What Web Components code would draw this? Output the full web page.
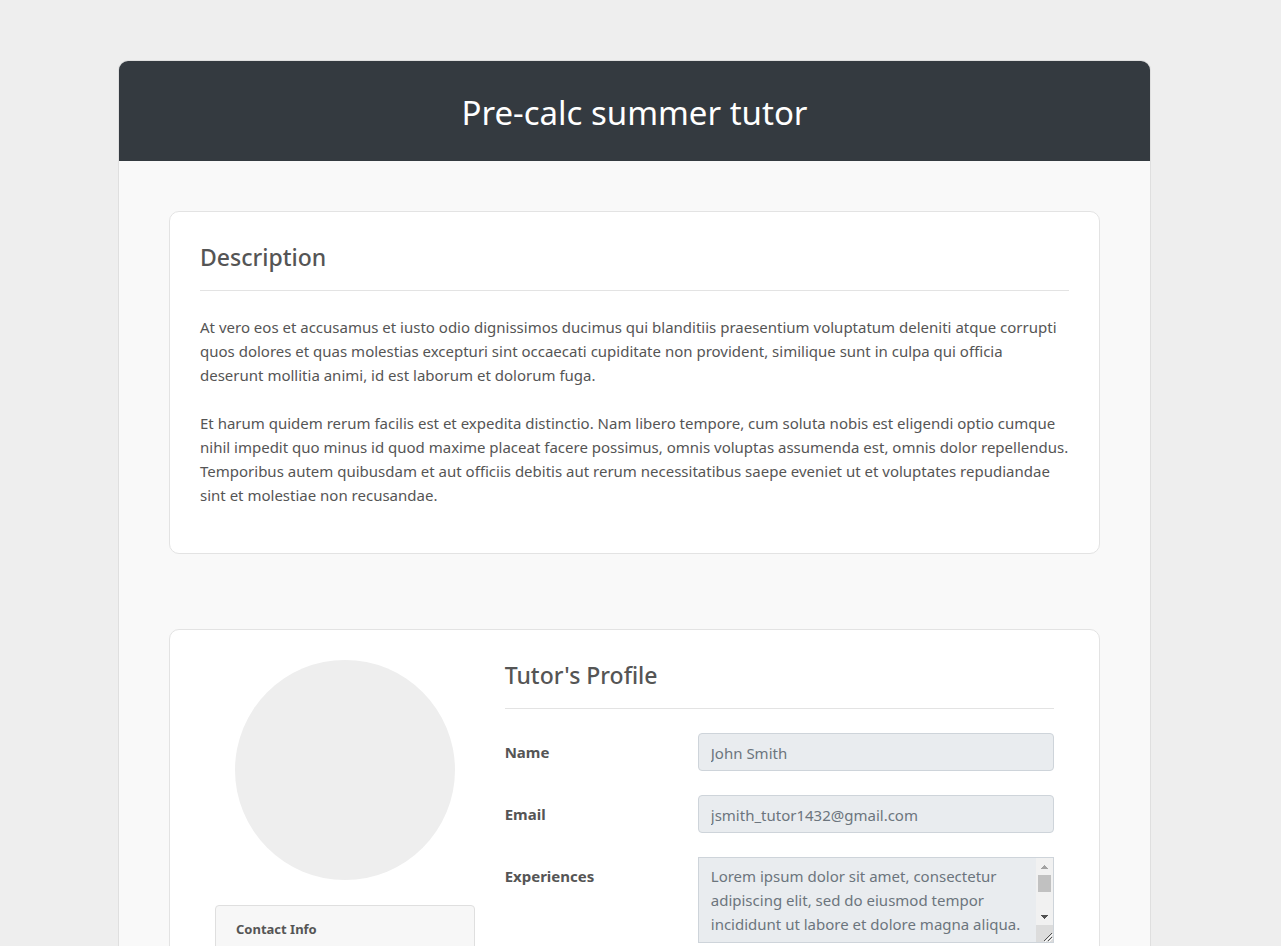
<!DOCTYPE html>
<html lang="en">
<head>
<meta charset="utf-8">
<title>Pre-calc summer tutor</title>
<style>
  * { box-sizing: border-box; }
  body {
    margin: 0; height: 100vh; overflow: hidden; background: #eee; color: #555;
    font: 15px/24px "Segoe UI", "Noto Sans", "Open Sans", sans-serif;
    padding: 60px 12px 0 0;
  }
  p { margin: 0 0 24px; }
  p:last-child { margin-bottom: 16px; }
</style>
</head>
<body>
<listing-page heading="Pre-calc summer tutor">
  <info-card>
    <section-heading>Description</section-heading>
    <p>At vero eos et accusamus et iusto odio dignissimos ducimus qui blanditiis praesentium voluptatum deleniti atque corrupti quos dolores et quas molestias excepturi sint occaecati cupiditate non provident, similique sunt in culpa qui officia deserunt mollitia animi, id est laborum et dolorum fuga.</p>
    <p>Et harum quidem rerum facilis est et expedita distinctio. Nam libero tempore, cum soluta nobis est eligendi optio cumque nihil impedit quo minus id quod maxime placeat facere possimus, omnis voluptas assumenda est, omnis dolor repellendus. Temporibus autem quibusdam et aut officiis debitis aut rerum necessitatibus saepe eveniet ut et voluptates repudiandae sint et molestiae non recusandae.</p>
  </info-card>
  <info-card>
    <tutor-profile>
      <profile-avatar slot="side"></profile-avatar>
      <contact-panel slot="side">Contact Info</contact-panel>
      <section-heading>Tutor's Profile</section-heading>
      <profile-field label="Name" value="John Smith"></profile-field>
      <profile-field label="Email" value="jsmith_tutor1432@gmail.com"></profile-field>
      <profile-field label="Experiences" multiline value="Lorem ipsum dolor sit amet, consectetur adipiscing elit, sed do eiusmod tempor incididunt ut labore et dolore magna aliqua."></profile-field>
    </tutor-profile>
  </info-card>
</listing-page>

<script>
const define = (name, html, setup) => customElements.define(name, class extends HTMLElement {
  constructor() {
    super();
    const t = document.createElement('template');
    t.innerHTML = html;
    this.attachShadow({ mode: 'open' }).append(t.content.cloneNode(true));
  }
  connectedCallback() { if (setup) setup(this, this.shadowRoot); }
});

define('listing-page', `
  <style>
    :host { display: block; box-sizing: border-box; max-width: 1033px; margin: 0 auto;
      background: #f9f9f9; border: 1px solid #dfdfdf; border-radius: 10px; overflow: hidden; }
    header { background: #343a40; padding: 30px 20px 26px; }
    h1 { margin: 0; color: #fff; text-align: center; font-size: 33px; line-height: 44px; font-weight: 400; }
    main { display: flex; flex-direction: column; gap: 75px; padding: 50px; }
  </style>
  <header><h1></h1></header>
  <main><slot></slot></main>`,
  (el, root) => { root.querySelector('h1').textContent = el.getAttribute('heading'); });

define('info-card', `
  <style>
    :host { display: block; background: #fff; border: 1px solid #e3e3e3; border-radius: 10px; padding: 30px; }
  </style>
  <slot></slot>`);

define('section-heading', `
  <style>
    :host { display: block; border-bottom: 1px solid #e3e3e3; margin-bottom: 24px; padding-bottom: 18px; }
    h2 { margin: 0; font-size: 23px; line-height: 30px; font-weight: 500; }
  </style>
  <h2><slot></slot></h2>`);

define('tutor-profile', `
  <style>
    :host { display: grid; grid-template-columns: 1fr 2fr; }
    div { padding: 0 15px; min-width: 0; }
  </style>
  <div><slot name="side"></slot></div>
  <div><slot></slot></div>`);

define('profile-avatar', `
  <style>
    :host { display: block; width: 220px; height: 220px; margin: 0 auto 25px; border-radius: 50%; background: #eee; }
  </style>`);

define('contact-panel', `
  <style>
    :host { display: block; box-sizing: border-box; background: #f7f7f7; border: 1px solid #dfdfdf; border-radius: 4px; padding: 12px 20px; }
    h3 { margin: 0; font-size: 13px; line-height: 22px; font-weight: 700; }
  </style>
  <h3><slot></slot></h3>`);

define('scroll-rail', `
  <style>
    :host { display: flex; flex-direction: column; width: 17px; background: #f1f1f1; }
    svg { display: block; flex: none; }
    .track { flex: 1; }
    .thumb { height: 17px; margin: 0 2px; background: #c1c1c1; }
    .grip { background: #dcdcdc; }
  </style>
  <svg width="17" height="17" shape-rendering="crispEdges"><path d="M8 7h1v1h1v1h1v1h1v1H5v-1h1V9h1V8h1z" fill="#a3a3a3"/></svg>
  <div class="track"><div class="thumb"></div></div>
  <svg width="17" height="17" shape-rendering="crispEdges"><path d="M5 7h7v1h-1v1h-1v1H9v1H8v-1H7V9H6V8H5z" fill="#505050"/></svg>
  <svg class="grip" width="17" height="17"><path d="M8 16L16 8M12 16L16 12" stroke="#fff" transform="translate(1 1)"/><path d="M8 16L16 8M12 16L16 12" stroke="#505050"/></svg>`);

define('profile-field', `
  <style>
    :host { display: grid; grid-template-columns: 1fr 2fr; margin: 0 -15px 24px; }
    label { padding: 7px 15px; font-weight: 700; }
    .cell { padding: 0 15px; min-width: 0; }
    .box { position: relative; }
    input, textarea { box-sizing: border-box; display: block; width: 100%; margin: 0; font: inherit;
      color: #6c757d; background: #e9ecef; border: 1px solid #ced4da; border-radius: 4px; padding: 6px 12px; outline: 0; }
    input { height: 38px; padding: 7px 12px 5px; }
    textarea { height: 86px; border-radius: 0; resize: none; padding-right: 29px; }
    scroll-rail { position: absolute; top: 1px; right: 1px; bottom: 1px; }
  </style>
  <label for="field"></label>
  <div class="cell"><div class="box"></div></div>`,
  (el, root) => {
    const multiline = el.hasAttribute('multiline');
    root.querySelector('label').textContent = el.getAttribute('label');
    const field = document.createElement(multiline ? 'textarea' : 'input');
    field.id = 'field';
    field.readOnly = true;
    field.value = el.getAttribute('value');
    const box = root.querySelector('.box');
    box.replaceChildren(field);
    if (multiline) box.append(document.createElement('scroll-rail'));
  });
</script>
</body>
</html>
